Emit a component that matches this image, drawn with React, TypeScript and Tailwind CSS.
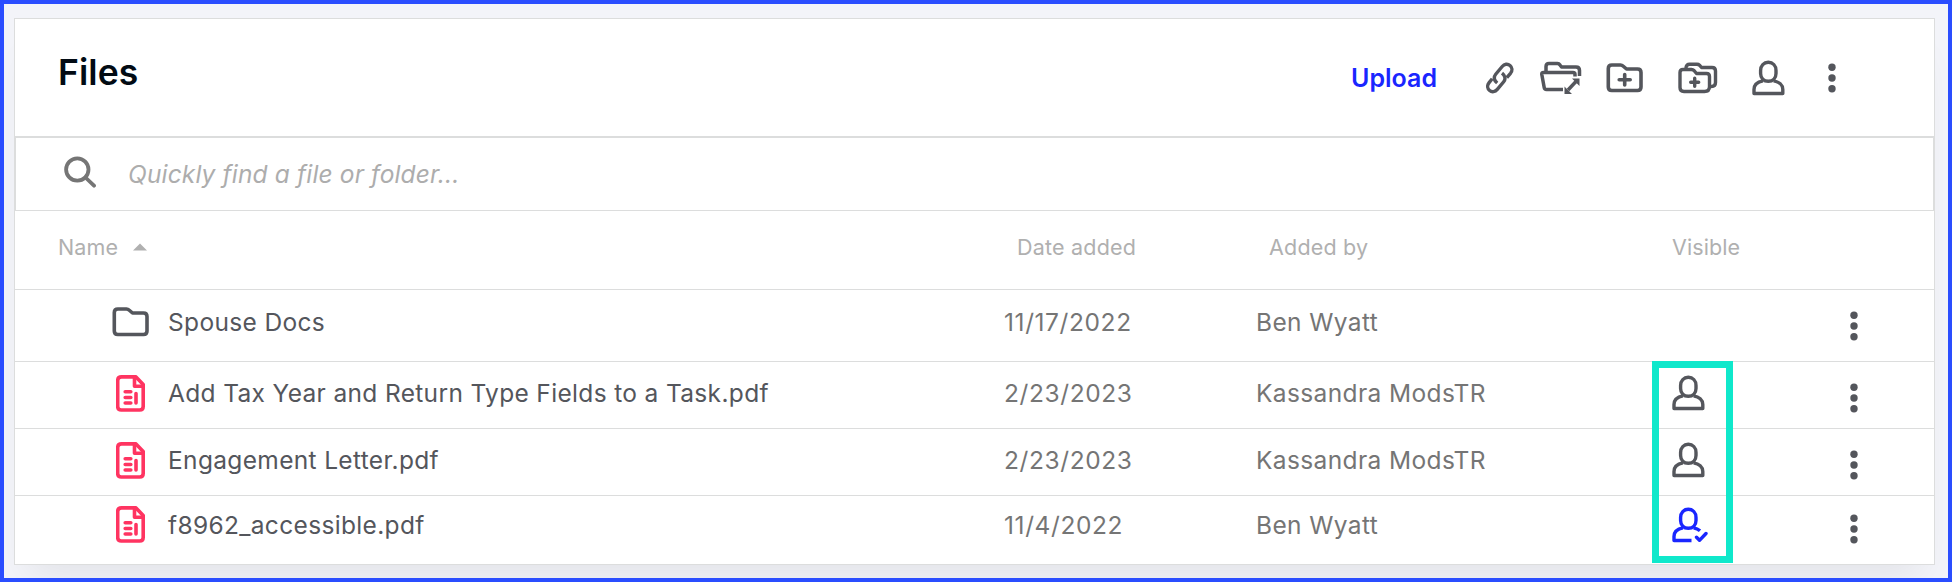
import React from "react";

type IconProps = { className?: string };

interface IFile {
  id: number;
  name: string;
  date: string;
  addedBy: string;
  type: "folder" | "pdf";
  visible: "none" | "client" | "seen";
  rowClass: string;
}

const files: IFile[] = [
  {
    id: 0,
    name: "Spouse Docs",
    date: "11/17/2022",
    addedBy: "Ben Wyatt",
    type: "folder",
    visible: "none",
    rowClass: "h-[72px] pb-2",
  },
  {
    id: 1,
    name: "Add Tax Year and Return Type Fields to a Task.pdf",
    date: "2/23/2023",
    addedBy: "Kassandra ModsTR",
    type: "pdf",
    visible: "client",
    rowClass: "h-[67px] pb-1",
  },
  {
    id: 2,
    name: "Engagement Letter.pdf",
    date: "2/23/2023",
    addedBy: "Kassandra ModsTR",
    type: "pdf",
    visible: "client",
    rowClass: "h-[67px] pb-1",
  },
  {
    id: 3,
    name: "f8962_accessible.pdf",
    date: "11/4/2022",
    addedBy: "Ben Wyatt",
    type: "pdf",
    visible: "seen",
    rowClass: "h-[68px] pb-2.5",
  },
];

function LinkIcon({ className }: IconProps) {
  return (
    <svg
      className={className}
      width="28"
      height="32"
      viewBox="0 0 28 32"
      fill="none"
      stroke="currentColor"
      strokeWidth="3.4"
    >
      <path d="M11.2 21C8 18.300 7.500 15 9.700 12.300L16.200 4.500C18.300 1.900 21.700 1.500 24 3.500C26.400 5.500 26.600 8.700 24.500 11.300L20.800 15.600" />
      <path d="M16 11.200C19.200 13.700 19.900 17 17.700 19.700L11.300 27.400C9.200 30 5.900 30.400 3.600 28.500C1.200 26.500 1 23.200 3.100 20.600L6.200 16.800" />
    </svg>
  );
}

function FolderMoveIcon({ className }: IconProps) {
  return (
    <svg
      className={className}
      width="42"
      height="34"
      viewBox="0 0 42 34"
      fill="none"
      stroke="currentColor"
      strokeWidth="3.5"
      strokeLinejoin="round"
    >
      <path d="M6 10V5.500Q6 2.500 9 2.500H17.500Q19 2.500 20 4L21.500 6H36Q39.500 6 39.500 9.500V15" />
      <path d="M23 28.500H6.500Q4.500 28.500 4.200 26.500L1.800 13.500Q1.500 11.500 3.500 11.500H33Q35 11.500 35 13.500V15.500" />
      <path d="M28 29L36 20.500" />
      <path
        d="M39.500 17.500V25L32 17.500ZM24.500 33V25.500L32 33Z"
        fill="currentColor"
        stroke="none"
      />
    </svg>
  );
}

function FolderIcon({ className, plus }: IconProps & { plus?: boolean }) {
  return (
    <svg
      className={className}
      width="38"
      height="30"
      viewBox="0 0 38 30"
      fill="none"
      stroke="currentColor"
      strokeWidth="3.6"
      strokeLinejoin="round"
      strokeLinecap="round"
    >
      <path d="M2.300 5.500Q2.300 2 5.800 2H14.500Q16 2 17 3L20.500 6H31.500Q35 6 35 9.500V24Q35 27.500 31.500 27.500H5.800Q2.300 27.500 2.300 24Z" />
      {plus && <path d="M18.700 11.500V22M13.200 16.800H24.200" />}
    </svg>
  );
}

function FoldersIcon({ className }: IconProps) {
  return (
    <svg
      className={className}
      width="40"
      height="32"
      viewBox="0 0 40 32"
      fill="none"
      stroke="currentColor"
      strokeWidth="3.4"
      strokeLinejoin="round"
      strokeLinecap="round"
    >
      <path d="M8 5.500Q8.500 2.200 11.500 2.200H19Q20.500 2.200 21.500 3.200L23.500 5.500H34Q37.500 5.500 37.500 9V20.500Q37.500 24.500 33.500 24.500" />
      <path d="M2 10.500Q2 7.500 5 7.500H13.500Q15 7.500 16 8.500L18.500 11.500H28.500Q31.500 11.500 31.500 14.500V24.500Q31.500 29.500 26.500 29.500H6Q2 29.500 2 25.500Z" />
      <path d="M16.700 16.300V24.300M12.700 20.300H20.700" />
    </svg>
  );
}

function UserIcon({ className }: IconProps) {
  return (
    <svg
      className={className}
      width="33"
      height="36"
      viewBox="0 0 33 36"
      fill="none"
      stroke="currentColor"
      strokeWidth="3.4"
      strokeLinejoin="round"
    >
      <path d="M16.300 2.300C20.800 2.300 24 5.600 24 10.500V13.500C24 18.300 20.800 21.300 16.300 21.300S8.600 18.300 8.600 13.500V10.500C8.600 5.600 11.800 2.300 16.300 2.300Z" />
      <path d="M11 20.800C5.500 21.800 2 25 2 29.500V33.500H30.800V29.500C30.800 25 27 21.800 21.600 20.800" />
    </svg>
  );
}

function UserCheckIcon({ className }: IconProps) {
  return (
    <svg
      className={className}
      width="36"
      height="36"
      viewBox="0 0 36 36"
      fill="none"
      stroke="currentColor"
      strokeWidth="3.4"
      strokeLinejoin="round"
    >
      <path d="M16.300 2.300C20.800 2.300 24 5.600 24 10.500V13.500C24 18.300 20.800 21.300 16.300 21.300S8.600 18.300 8.600 13.500V10.500C8.600 5.600 11.800 2.300 16.300 2.300Z" />
      <path d="M11 20.800C5.500 21.800 2 25 2 29.500V33.500H19.500" />
      <path d="M21.600 20.800Q25.500 21.600 28 23.800" />
      <path d="M24.500 30.300L27.500 33.300L34 26.500" strokeLinecap="round" />
    </svg>
  );
}

function PdfIcon({ className }: IconProps) {
  return (
    <svg
      className={className}
      width="29"
      height="37"
      viewBox="0 0 29 37"
      fill="none"
      stroke="currentColor"
      strokeWidth="3.6"
      strokeLinejoin="round"
      strokeLinecap="round"
    >
      <path d="M5.500 1.900H20L27.200 9.500V31.500Q27.200 35 23.700 35H5.200Q1.700 35 1.700 31.500V5.500Q1.700 1.900 5.500 1.900Z" />
      <path d="M18.500 2.500V11.300H27" />
      <path d="M9.200 16.800H14.800M9.200 22.500H14.800M9.200 28H14.800M20 18.500V28" />
    </svg>
  );
}

function DotsIcon({ className }: IconProps) {
  return (
    <svg
      className={className}
      width="8"
      height="30"
      viewBox="0 0 8 30"
      fill="currentColor"
    >
      <circle cx="4" cy="4.200" r="3.700" />
      <circle cx="4" cy="15" r="3.700" />
      <circle cx="4" cy="25.800" r="3.700" />
    </svg>
  );
}

function SearchIcon({ className }: IconProps) {
  return (
    <svg
      className={className}
      width="32"
      height="32"
      viewBox="0 0 32 32"
      fill="none"
      stroke="currentColor"
      strokeWidth="3.8"
      strokeLinecap="round"
    >
      <circle cx="13.300" cy="13.500" r="11.200" />
      <path d="M21.500 21.500L30 29.700" />
    </svg>
  );
}

function FileRow({ file }: { file: IFile }) {
  return (
    <div
      className={`flex items-center border-t border-[#dcdddd] text-[24.5px] tracking-[0.38px] text-[#757575] ${file.rowClass}`}
    >
      <div className="w-[153px] pl-[97px] text-[#54565c]">
        {file.type === "folder" ? (
          <FolderIcon />
        ) : (
          <PdfIcon className="ml-1 text-[#ff3461]" />
        )}
      </div>
      <div className="w-[836px] pt-px tracking-[0.34px] text-[#54565c]">
        {file.name}
      </div>
      <div className="w-[252px] pt-px tracking-[0.6px]">{file.date}</div>
      <div className="w-[416px] pt-px">{file.addedBy}</div>
      <div className="w-[178px] text-[#54565c]">
        {file.visible === "client" && <UserIcon />}
        {file.visible === "seen" && (
          <UserCheckIcon className="text-[#1a26ff]" />
        )}
      </div>
      <DotsIcon className="mt-[9px] text-[#54565c]" />
    </div>
  );
}

function App() {
  return (
    <div className="w-[1952px] h-[582px] overflow-hidden border-4 border-[#2a4dff] bg-[#f3f4f9] px-2.5 pt-3.5 font-['Inter',sans-serif]">
      <div className="relative w-[1921px] h-[547px] border border-[#dcdddd] bg-white shadow-[0_24px_36px_-16px_rgba(0,0,0,0.08)]">
        <div className="flex h-[117px] justify-between pl-[43px] pr-[98px]">
          <h1 className="mt-8 text-[35.5px] leading-[44px] font-semibold tracking-[0.1px] text-[#020b14]">
            Files
          </h1>
          <div className="flex h-[117px] items-center text-[#54565c]">
            <button className="mt-0.5 mr-[49px] text-[25px] font-semibold text-[#1a26ff]">
              Upload
            </button>
            <LinkIcon className="mr-[26px]" />
            <FolderMoveIcon className="mr-[24px]" />
            <FolderIcon plus className="mr-[34px]" />
            <FoldersIcon className="mr-[34px]" />
            <UserIcon className="mr-[43px]" />
            <DotsIcon />
          </div>
        </div>
        <div className="flex h-[75px] items-center border border-t-2 border-[#dcdddd] pl-12">
          <SearchIcon className="mb-1 mr-8 text-[#757575]" />
          <span className="text-[24.5px] italic tracking-[0.15px] text-[#adadad]">
            Quickly find a file or folder...
          </span>
        </div>
        <div className="flex h-[78px] items-center pb-1.5 pl-[43px] text-[21.5px] tracking-[0.1px] text-[#b0b0b0]">
          <div className="flex w-[959px] items-center">
            Name
            <svg className="ml-[15px]" width="14" height="8" viewBox="0 0 14 8">
              <path d="M0 7.500L7 0.500L14 7.500Z" fill="currentColor" />
            </svg>
          </div>
          <div className="w-[252px] tracking-[0.2px]">Date added</div>
          <div className="w-[403px] tracking-[0.2px]">Added by</div>
          <div>Visible</div>
        </div>
        {files.map((file) => (
          <FileRow key={file.id} file={file} />
        ))}
        {/* highlight around the visibility column */}
        <div className="absolute left-[1637px] top-[342px] h-[202px] w-[81px] border-[7px] border-[#0fe8cb]"></div>
      </div>
    </div>
  );
}

export default App;
